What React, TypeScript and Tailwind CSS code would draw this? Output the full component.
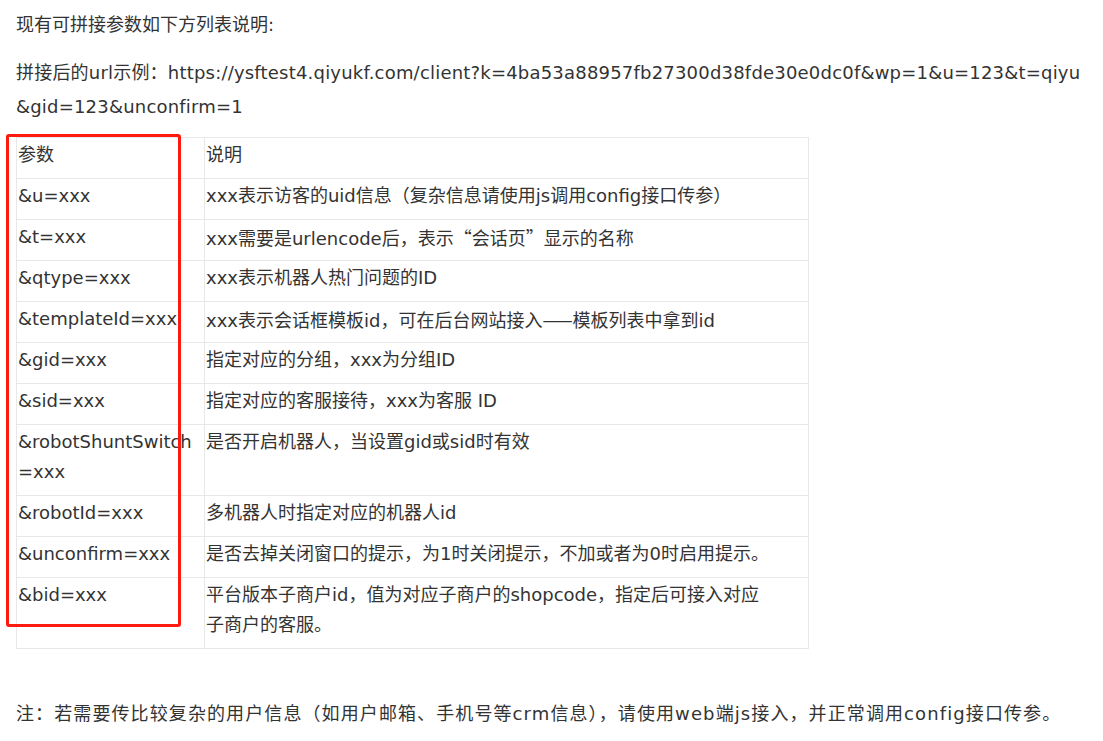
import type { ReactNode } from "react";

// punctuation that should come from the CJK face, not DejaVu
const Cjk = ({ children }: { children: ReactNode }) => (
  <span style={{ fontFamily: '"Noto Sans CJK SC", sans-serif' }}>{children}</span>
);

type Row = { k: ReactNode; v: ReactNode; tall?: boolean };

const rows: Row[] = [
  { k: "&u=xxx", v: "xxx表示访客的uid信息（复杂信息请使用js调用config接口传参）" },
  {
    k: "&t=xxx",
    v: (
      <>
        xxx需要是urlencode后，表示<Cjk>“</Cjk>会话页<Cjk>”</Cjk>显示的名称
      </>
    ),
  },
  { k: "&qtype=xxx", v: "xxx表示机器人热门问题的ID" },
  {
    k: "&templateId=xxx",
    v: (
      <>
        xxx表示会话框模板id，可在后台网站接入<Cjk>——</Cjk>模板列表中拿到id
      </>
    ),
  },
  { k: "&gid=xxx", v: "指定对应的分组，xxx为分组ID" },
  { k: "&sid=xxx", v: "指定对应的客服接待，xxx为客服 ID" },
  { k: "&robotShuntSwitch\n=xxx", v: "是否开启机器人，当设置gid或sid时有效", tall: true },
  { k: "&robotId=xxx", v: "多机器人时指定对应的机器人id" },
  { k: "&unconfirm=xxx", v: "是否去掉关闭窗口的提示，为1时关闭提示，不加或者为0时启用提示。" },
  {
    k: "&bid=xxx",
    v: "平台版本子商户id，值为对应子商户的shopcode，指定后可接入对应\n子商户的客服。",
    tall: true,
  },
];

const cell =
  "border border-[#e8e8e8] pb-[8px] pl-px pt-[2px] text-left align-top font-normal leading-[30px]";

const Cell = ({ children, tall }: { children: ReactNode; tall?: boolean }) => (
  <div className={tall ? "h-[60px] whitespace-pre-line" : "h-[30px] whitespace-pre-line"}>{children}</div>
);

export default function App() {
  return (
    <div
      className="min-h-[741px] bg-white pl-4 pt-2 text-[18px] text-[#333]"
      style={{ fontFamily: '"DejaVu Sans", "Noto Sans CJK SC", sans-serif' }}
    >
      <p className="leading-[34px]">现有可拼接参数如下方列表说明:</p>
      <p className="mt-[14px] whitespace-nowrap leading-[34px] tracking-[0.2px]">
        拼接后的url示例：https://ysftest4.qiyukf.com/client?k=4ba53a88957fb27300d38fde30e0dc0f&amp;wp=1&amp;u=123&amp;t=qiyu
        <br />
        &amp;gid=123&amp;unconfirm=1
      </p>

      <div className="relative mt-[13px] w-[793px]">
        <table className="w-full table-fixed border-collapse">
          <colgroup>
            <col className="w-[188px]" />
            <col />
          </colgroup>
          <thead>
            <tr>
              <th className={cell}>
                <Cell>参数</Cell>
              </th>
              <th className={cell}>
                <Cell>说明</Cell>
              </th>
            </tr>
          </thead>
          <tbody>
            {rows.map((r, i) => (
              <tr key={i}>
                <td className={cell}>
                  <Cell tall={r.tall}>{r.k}</Cell>
                </td>
                <td className={cell}>
                  <Cell tall={r.tall}>{r.v}</Cell>
                </td>
              </tr>
            ))}
          </tbody>
        </table>
        {/* red annotation box */}
        <div className="pointer-events-none absolute left-[-10px] top-[-3px] h-[493px] w-[175px] rounded-[3px] border-[3px] border-[#ff1a10]" />
      </div>

      <p className="mt-[48px] whitespace-nowrap leading-[34px] tracking-[1.1px]">
        注：若需要传比较复杂的用户信息（如用户邮箱、手机号等crm信息），请使用web端js接入，并正常调用config接口传参。
      </p>
    </div>
  );
}
